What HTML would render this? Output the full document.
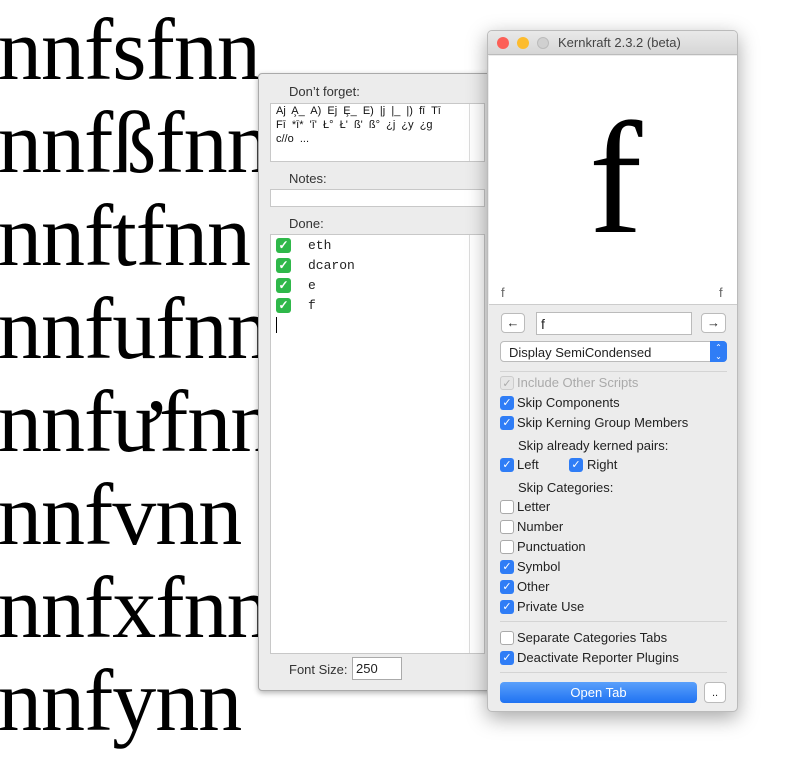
<!DOCTYPE html>
<html><head><meta charset="utf-8"><style>
*{margin:0;padding:0;box-sizing:border-box}
body{width:785px;height:767px;background:#fff;position:relative;overflow:hidden;font-family:"Liberation Sans",sans-serif;font-size:13px;color:#222}
.bg{position:absolute;left:-2px;font-family:"Liberation Serif",serif;font-size:88px;line-height:93px;color:#000;white-space:nowrap;top:4px;letter-spacing:-1px}
.a{position:absolute}
.lw{left:258px;top:73px;width:240px;height:618px;background:#ececec;border:1px solid #aaa;border-radius:4px;box-shadow:0 2px 6px rgba(0,0,0,.3)}
.lbl{position:absolute;color:#333;font-size:13px}
.box{position:absolute;background:#fff;border:1px solid #c8c8c8}
.mono{font-family:"Liberation Mono",monospace;font-size:12px}
.rw{left:487px;top:30px;width:251px;height:682px;background:#ececec;border:1px solid #bbb;border-radius:5px;box-shadow:0 6px 20px rgba(0,0,0,.35);overflow:hidden}
.cb{position:absolute;width:14px;height:14px;border-radius:3px;background:#2f7df6;color:#fff;font-size:11px;line-height:14px;text-align:center}
.cb.off{background:#fff;border:1px solid #aaa}
.cb.dis{background:#e6e6e6;border:1px solid #ccc;color:#aaa}
.t{position:absolute;font-size:13px;color:#222;white-space:nowrap}
.chk{position:absolute;left:276px;width:15px;height:15px;background:#2fb84a;border-radius:3px;color:#fff;font-size:12px;line-height:15px;text-align:center;font-weight:bold}
</style></head><body>
<div class="bg">nnfsfnn<br>nnfßfnn<br>nnftfnn<br>nnfufnn<br>nnfưfnn<br>nnfvnn<br>nnfxfnn<br>nnfynn</div>

<div class="a lw"></div>
<div class="lbl" style="left:289px;top:84px">Don’t forget:</div>
<div class="box" style="left:270px;top:103px;width:215px;height:59px"></div>
<div class="a" style="left:469px;top:104px;width:1px;height:57px;background:#ddd"></div>
<div class="a" style="left:276px;top:104px;font-size:11px;line-height:14px;color:#111;white-space:pre">Aj  A̧_  A)  Ej  Ȩ_  E)  |j  |_  |)  fī  Tī
Fī  *ī*  'ī'  Ł°  Ł'  ß'  ß°  ¿j  ¿y  ¿g
c//o  ...</div>
<div class="lbl" style="left:289px;top:171px">Notes:</div>
<div class="box" style="left:270px;top:189px;width:215px;height:18px"></div>
<div class="lbl" style="left:289px;top:216px">Done:</div>
<div class="box" style="left:270px;top:234px;width:215px;height:420px"></div>
<div class="a" style="left:469px;top:235px;width:1px;height:418px;background:#ddd"></div>
<div class="chk" style="top:238px">✓</div><div class="t mono" style="left:308px;top:238px">eth</div>
<div class="chk" style="top:258px">✓</div><div class="t mono" style="left:308px;top:258px">dcaron</div>
<div class="chk" style="top:278px">✓</div><div class="t mono" style="left:308px;top:278px">e</div>
<div class="chk" style="top:298px">✓</div><div class="t mono" style="left:308px;top:298px">f</div>
<div class="a" style="left:276px;top:317px;width:1px;height:16px;background:#000"></div>
<div class="lbl" style="left:289px;top:662px">Font Size:</div>
<div class="box" style="left:352px;top:657px;width:50px;height:23px;border-color:#aaa;padding:3px 0 0 3px;font-size:13px">250</div>

<div class="a rw">
  <div class="a" style="left:0;top:0;width:251px;height:24px;background:linear-gradient(#e9e9e9,#d6d6d6);border-bottom:1px solid #bbb"></div>
  <div class="a" style="left:9px;top:6px;width:12px;height:12px;border-radius:50%;background:#fc5f57"></div>
  <div class="a" style="left:29px;top:6px;width:12px;height:12px;border-radius:50%;background:#fdbc2e"></div>
  <div class="a" style="left:49px;top:6px;width:12px;height:12px;border-radius:50%;background:#d0d0d0;border:1px solid #bbb"></div>
  <div class="a" style="left:70px;top:4px;font-size:13px;color:#444">Kernkraft 2.3.2 (beta)</div>
  <div class="a" style="left:1px;top:25px;width:249px;height:249px;background:#fff;border-bottom:1px solid #ccc"></div>
  <div class="a" style="left:101px;top:27px;font-family:'Liberation Serif',serif;font-size:160px;line-height:240px;color:#000">f</div>
  <div class="a" style="left:13px;top:254px;font-size:13px;color:#666">f</div>
  <div class="a" style="left:231px;top:254px;font-size:13px;color:#666">f</div>
  <div class="a" style="left:13px;top:282px;width:24px;height:20px;background:#fff;border:1px solid #bbb;border-radius:4px;text-align:center;font-size:13px;line-height:18px">←</div>
  <div class="a" style="left:48px;top:281px;width:156px;height:23px;background:#fff;border:1px solid #bbb;padding:3px 4px;font-size:14px">f</div>
  <div class="a" style="left:213px;top:282px;width:25px;height:20px;background:#fff;border:1px solid #bbb;border-radius:4px;text-align:center;font-size:13px;line-height:18px">→</div>
  <div class="a" style="left:12px;top:310px;width:227px;height:21px;background:#fff;border:1px solid #bbb;border-radius:4px;padding:3px 8px;font-size:13px">Display SemiCondensed</div>
  <div class="a" style="left:222px;top:310px;width:17px;height:21px;background:#2f7df6;border-radius:0 4px 4px 0;color:#fff;font-size:8px;line-height:9px;text-align:center;padding-top:2px">⌃<br>⌄</div>
  <div class="a" style="left:12px;top:340px;width:227px;height:1px;background:#d4d4d4"></div>
  <div class="a" style="left:12px;top:590px;width:227px;height:1px;background:#d4d4d4"></div>
  <div class="a" style="left:12px;top:641px;width:227px;height:1px;background:#d4d4d4"></div>
  <div class="a" style="left:12px;top:651px;width:197px;height:21px;background:linear-gradient(#5aa0fb,#1f72f2);border-radius:4px;color:#fff;text-align:center;font-size:13px;line-height:21px">Open Tab</div>
  <div class="a" style="left:216px;top:651px;width:22px;height:21px;background:#fff;border:1px solid #bbb;border-radius:4px;text-align:center;font-size:11px;line-height:20px">..</div>
</div>
<div class="cb dis" style="left:500px;top:376px">✓</div><div class="t" style="left:517px;top:375px;color:#aaa">Include Other Scripts</div>
<div class="cb" style="left:500px;top:396px">✓</div><div class="t" style="left:517px;top:395px">Skip Components</div>
<div class="cb" style="left:500px;top:416px">✓</div><div class="t" style="left:517px;top:415px">Skip Kerning Group Members</div>
<div class="t" style="left:518px;top:438px">Skip already kerned pairs:</div>
<div class="cb" style="left:500px;top:458px">✓</div><div class="t" style="left:517px;top:457px">Left</div>
<div class="cb" style="left:569px;top:458px">✓</div><div class="t" style="left:587px;top:457px">Right</div>
<div class="t" style="left:518px;top:480px">Skip Categories:</div>
<div class="cb off" style="left:500px;top:500px"></div><div class="t" style="left:517px;top:499px">Letter</div>
<div class="cb off" style="left:500px;top:520px"></div><div class="t" style="left:517px;top:519px">Number</div>
<div class="cb off" style="left:500px;top:540px"></div><div class="t" style="left:517px;top:539px">Punctuation</div>
<div class="cb" style="left:500px;top:560px">✓</div><div class="t" style="left:517px;top:559px">Symbol</div>
<div class="cb" style="left:500px;top:580px">✓</div><div class="t" style="left:517px;top:579px">Other</div>
<div class="cb" style="left:500px;top:600px">✓</div><div class="t" style="left:517px;top:599px">Private Use</div>
<div class="cb off" style="left:500px;top:631px"></div><div class="t" style="left:517px;top:630px">Separate Categories Tabs</div>
<div class="cb" style="left:500px;top:651px">✓</div><div class="t" style="left:517px;top:650px">Deactivate Reporter Plugins</div>
</body></html>
